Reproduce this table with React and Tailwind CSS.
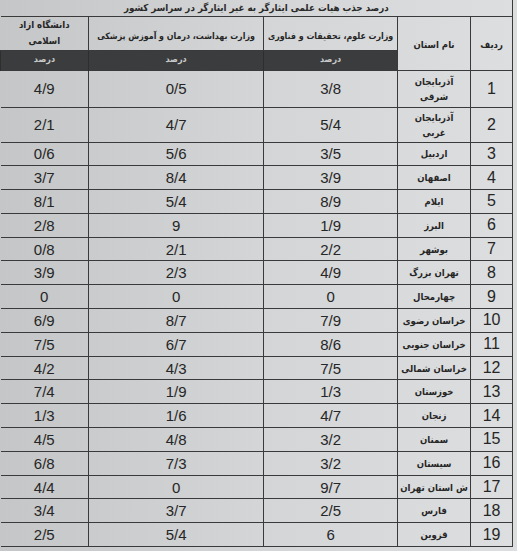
import React from 'react';

// province rows: [name, science ministry, health ministry, azad university]
const ROWS = [
  [['آذربایجان', 'شرقی'], '3/8', '0/5', '4/9'],
  [['آذربایجان', 'غربی'], '5/4', '4/7', '2/1'],
  ['اردبیل', '3/5', '5/6', '0/6'],
  ['اصفهان', '3/9', '8/4', '3/7'],
  ['ایلام', '8/9', '5/4', '8/1'],
  ['البرز', '1/9', '9', '2/8'],
  ['بوشهر', '2/2', '2/1', '0/8'],
  ['تهران بزرگ', '4/9', '2/3', '3/9'],
  ['چهارمحال', '0', '0', '0'],
  ['خراسان رضوی', '7/9', '8/7', '6/9'],
  ['خراسان جنوبی', '8/6', '6/7', '7/5'],
  ['خراسان شمالی', '7/5', '4/3', '4/2'],
  ['خوزستان', '1/3', '1/9', '7/4'],
  ['زنجان', '4/7', '1/6', '1/3'],
  ['سمنان', '3/2', '4/8', '4/5'],
  ['سیستان', '3/2', '7/3', '6/8'],
  ['ش استان تهران', '9/7', '0', '4/4'],
  ['فارس', '2/5', '3/7', '3/4'],
  ['قزوین', '6', '5/4', '2/5'],
];

const fa = { fontFamily: '"DejaVu Sans Condensed", "DejaVu Sans", sans-serif' };
const num = { fontFamily: '"Liberation Sans", Arial, sans-serif' };

const rowHeight = (i) => (i === 0 ? 'h-[37px]' : i === 1 ? 'h-[35px]' : 'h-[23.8px]');

export default function App() {
  return (
    <div className="w-[517px] h-[551px] overflow-hidden bg-gradient-to-r from-[#c4c6c7] via-[#d3d5d6] to-[#dcdedf] text-[#262626]">
      <table dir="rtl" className="w-[512px] table-fixed border-collapse">
        <colgroup>
          <col className="w-[42px]" />
          <col className="w-[73px]" />
          <col className="w-[134px]" />
          <col className="w-[175px]" />
          <col className="w-[88px]" />
        </colgroup>
        <thead>
          <tr className="h-[16px]">
            <th colSpan={5} style={fa} className="whitespace-nowrap border-b border-r border-[#3a3a3a] text-[9.7px] font-bold leading-none text-[#2a2a2a]">
              درصد جذب هیات علمی ایثارگر به غیر ایثارگر در سراسر کشور
            </th>
          </tr>
          <tr className="h-[34px]">
            <th rowSpan={2} style={fa} className="border border-[#3a3a3a] pt-1 text-[9.5px] font-bold">ردیف</th>
            <th rowSpan={2} style={fa} className="border border-[#3a3a3a] pt-1 text-[9.5px] font-bold">نام استان</th>
            <th style={fa} className="whitespace-nowrap border border-[#3a3a3a] pt-2 text-[8.8px] font-bold">وزارت علوم، تحقیقات و فناوری</th>
            <th style={fa} className="whitespace-nowrap border border-[#3a3a3a] pt-2 text-[8.8px] font-bold">وزارت بهداشت، درمان و آموزش پزشکی</th>
            <th style={fa} className="border-b border-[#3a3a3a] text-[9.5px] font-bold leading-[16px]">
              دانشگاه ازاد
              <br />
              اسلامی
            </th>
          </tr>
          <tr className="h-[20px]">
            {[0, 1, 2].map((k) => (
              <th key={k} style={fa} className="border-x border-[#2e2e2e] bg-[#3b3c3e] text-[9px] font-bold text-[#c9c9c9]">
                درصد
              </th>
            ))}
          </tr>
        </thead>
        <tbody>
          {ROWS.map(([name, a, b, c], i) => (
            <tr key={i} className={rowHeight(i)}>
              <td style={num} className="border border-[#3a3a3a] p-0 text-center text-[16px] leading-none">{i + 1}</td>
              <td style={fa} className="whitespace-nowrap border border-[#3a3a3a] p-0 text-center text-[9.5px] font-bold leading-[15px]">
                {Array.isArray(name) ? (
                  <>
                    {name[0]}
                    <br />
                    {name[1]}
                  </>
                ) : (
                  name
                )}
              </td>
              {[a, b, c].map((v, k) => (
                <td key={k} style={num} dir="ltr" className={`border-y border-[#3a3a3a] p-0 text-center text-[15px] leading-none ${k < 2 ? 'border-x' : ''}`}>
                  {v}
                </td>
              ))}
            </tr>
          ))}
        </tbody>
      </table>
    </div>
  );
}
